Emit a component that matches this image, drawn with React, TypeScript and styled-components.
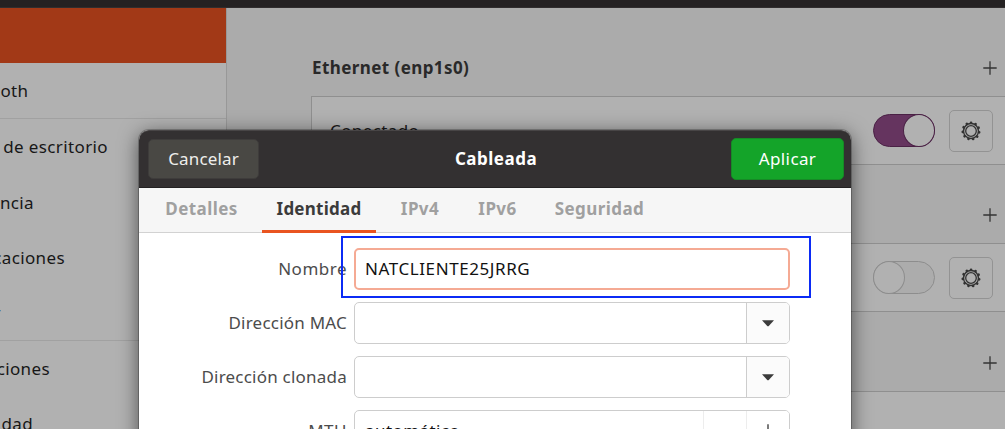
import React from "react";
import styled, { createGlobalStyle } from "styled-components";

const Global = createGlobalStyle`
  * { box-sizing: border-box; }
  body {
    margin: 0;
    overflow: hidden;
    font-family: "Noto Sans", "Open Sans", sans-serif;
    font-size: 17px;
    line-height: 24px;
  }
`;

const Screen = styled.div`
  position: relative;
  width: 1005px;
  height: 429px;
  overflow: hidden;
  background: #ababab;
  display: flex;
  flex-direction: column;
`;
const TopBar = styled.div`
  flex: none;
  height: 8px;
  background: #242122;
  border-bottom: 1px solid #302d2e;
`;
const Columns = styled.div`
  flex: 1;
  min-height: 0;
  display: flex;
`;

const Sidebar = styled.nav`
  flex: none;
  width: 227px;
  overflow: hidden;
  background: #b1b1b1;
  border-right: 1px solid #989898;
`;
const SideRow = styled.div<{ $active?: boolean; $line?: boolean; $h?: number }>`
  height: ${(p) => p.$h ?? 55}px;
  display: flex;
  align-items: center;
  background: ${(p) => (p.$active ? "#a23917" : "transparent")};
  border-bottom: ${(p) => (p.$line ? "1px solid #a1a1a1" : "none")};
`;
const SideName = styled.div<{ $w: number }>`
  width: ${(p) => p.$w}px;
  display: flex;
  justify-content: flex-end;
  overflow: hidden;
  white-space: nowrap;
  color: #171717;
  letter-spacing: 0.38px;
`;

const Main = styled.main`
  flex: 1;
  overflow: hidden;
  padding-left: 84px;
`;
const SectionHead = styled.div<{ $top: number; $bottom: number }>`
  padding: ${(p) => p.$top}px 8px ${(p) => p.$bottom}px 1px;
  height: ${(p) => p.$top + p.$bottom + 24}px;
  display: flex;
  align-items: center;
  justify-content: space-between;
  font-weight: 700;
  letter-spacing: 0.42px;
  color: #292929;
`;
const Card = styled.section`
  height: 69px;
  margin-right: -12px;
  padding: 0 23px 0 18px;
  display: flex;
  align-items: center;
  background: #b1b1b1;
  border: 1px solid #8f8f8f;
  color: #1a1a1a;
  letter-spacing: 0.4px;
`;
const Grow = styled.div`
  flex: 1;
`;
const Toggle = styled.div<{ $on?: boolean }>`
  width: 62px;
  height: 33px;
  border-radius: 17px;
  display: flex;
  justify-content: ${(p) => (p.$on ? "flex-end" : "flex-start")};
  background: ${(p) => (p.$on ? "#65345f" : "#acacac")};
  border: 1px solid ${(p) => (p.$on ? "#4a2145" : "#8d8d8d")};
`;
const Knob = styled.div<{ $on?: boolean }>`
  width: 32px;
  height: 33px;
  margin: -1px;
  border-radius: 50%;
  background: #b1b1b1;
  border: 1px solid ${(p) => (p.$on ? "#4a2145" : "#8d8d8d")};
`;
const GearButton = styled.div`
  width: 44px;
  height: 42px;
  margin-left: 14px;
  border: 1px solid #939393;
  border-radius: 5px;
  display: flex;
  align-items: center;
  justify-content: center;
`;

const Dialog = styled.div`
  position: absolute;
  left: 139px;
  top: 130px;
  width: 712px;
  height: 340px;
  border-radius: 10px 10px 0 0;
  background: #fff;
  box-shadow: 0 0 0 1px rgba(0, 0, 0, 0.22), 0 4px 20px rgba(0, 0, 0, 0.58);
`;
const DialogHeader = styled.header`
  height: 58px;
  padding: 0 7px 0 9px;
  display: grid;
  grid-template-columns: 1fr auto 1fr;
  align-items: center;
  border-radius: 10px 10px 0 0;
  background: #333031;
  border-top: 1px solid #484546;
  border-bottom: 1px solid #232122;
`;
const Title = styled.div`
  color: #fff;
  font-weight: 700;
  letter-spacing: 0.5px;
`;
const Button = styled.button<{ $primary?: boolean }>`
  width: ${(p) => (p.$primary ? 113 : 111)}px;
  height: ${(p) => (p.$primary ? 42 : 40)}px;
  justify-self: ${(p) => (p.$primary ? "end" : "start")};
  padding: 0 0 1px;
  font: inherit;
  letter-spacing: ${(p) => (p.$primary ? 0.4 : 0.15)}px;
  border-radius: 5px;
  color: ${(p) => (p.$primary ? "#fff" : "#eeeeec")};
  background: ${(p) => (p.$primary ? "#14a429" : "#494844")};
  border: 1px solid ${(p) => (p.$primary ? "#168a26" : "#3e3c3b")};
`;
const Tabs = styled.div`
  height: 45px;
  padding-left: 2px;
  display: flex;
  background: #f6f6f6;
  border-bottom: 1px solid #d2d2d2;
`;
const Tab = styled.div<{ $w: number; $active?: boolean }>`
  width: ${(p) => p.$w}px;
  height: 45px;
  display: flex;
  align-items: center;
  justify-content: center;
  font-weight: 700;
  letter-spacing: ${(p) => (p.$active ? 0.25 : 0.42)}px;
  color: ${(p) => (p.$active ? "#3b3b3b" : "#a0a0a0")};
  border-bottom: 3px solid ${(p) => (p.$active ? "#e95420" : "transparent")};
`;
const Form = styled.div`
  padding: 15px 60px 0 0;
  display: grid;
  grid-template-columns: 208px 436px;
  column-gap: 7px;
  row-gap: 12px;
  align-items: center;
`;
const Label = styled.label<{ $ls?: number }>`
  text-align: right;
  color: #4c4c4c;
  letter-spacing: ${(p) => p.$ls ?? 0.22}px;
`;
const Field = styled.div<{ $focus?: boolean }>`
  height: 42px;
  padding-left: ${(p) => (p.$focus ? 9 : 10)}px;
  display: flex;
  align-items: center;
  overflow: hidden;
  border-radius: 5px;
  color: #111;
  letter-spacing: ${(p) => (p.$focus ? 0.58 : 0.42)}px;
  background: #fff;
  border: ${(p) => (p.$focus ? "2px solid #f5aa94" : "1px solid #cdcdcd")};
`;
const FieldButton = styled.div<{ $plain?: boolean }>`
  width: 43px;
  height: 40px;
  display: flex;
  align-items: center;
  justify-content: center;
  background: ${(p) => (p.$plain ? "#fff" : "#fbfbfb")};
  border-left: 1px solid ${(p) => (p.$plain ? "#ededed" : "#cdcdcd")};
`;
const Highlight = styled.div`
  position: absolute;
  left: 202px;
  top: 106px;
  width: 470px;
  height: 62px;
  border: 2px solid #0b2bf5;
`;

const Plus = () => (
  <svg width="14" height="14" viewBox="0 0 14 14" stroke="#343434" strokeWidth="1.3">
    <path d="M7 .3v13.4M.3 7h13.4" />
  </svg>
);
const Gear = () => (
  <svg width="20" height="20" viewBox="0 0 20 20" fill="none" stroke="#333">
    <circle
      cx="10"
      cy="10"
      r="8.3"
      strokeWidth="2.6"
      strokeLinecap="round"
      strokeDasharray="0.1 4.641"
      transform="rotate(-90 10 10)"
    />
    <circle cx="10" cy="10" r="7.5" strokeWidth="1.4" />
    <circle cx="10" cy="10" r="5.3" strokeWidth="1.3" />
  </svg>
);
const Caret = () => (
  <svg width="12" height="7" viewBox="0 0 12 7" fill="#3b3b3b">
    <path d="M0 .3h12L7 5.7Q6 6.7 5 5.7Z" />
  </svg>
);

export default function App() {
  return (
    <Screen>
      <Global />
      <TopBar />
      <Columns>
        <Sidebar>
          <SideRow $active />
          <SideRow $h={56} $line><SideName $w={28.5}>oth</SideName></SideRow>
          <SideRow $h={56}><SideName $w={108}>de escritorio</SideName></SideRow>
          <SideRow><SideName $w={34}>encia</SideName></SideRow>
          <SideRow><SideName $w={65}>caciones</SideName></SideRow>
          <SideRow $h={56} $line><SideName $w={1}>r</SideName></SideRow>
          <SideRow><SideName $w={50}>ciones</SideName></SideRow>
          <SideRow><SideName $w={33}>dad</SideName></SideRow>
        </Sidebar>
        <Main>
          <SectionHead $top={48} $bottom={16}>Ethernet (enp1s0)<Plus /></SectionHead>
          <Card>
            Conectado
            <Grow />
            <Toggle $on><Knob $on /></Toggle>
            <GearButton><Gear /></GearButton>
          </Card>
          <SectionHead $top={38} $bottom={16}><Grow /><Plus /></SectionHead>
          <Card>
            <Grow />
            <Toggle><Knob /></Toggle>
            <GearButton><Gear /></GearButton>
          </Card>
          <SectionHead $top={39} $bottom={16}><Grow /><Plus /></SectionHead>
          <Card />
        </Main>
      </Columns>
      <Dialog>
        <DialogHeader>
          <Button>Cancelar</Button>
          <Title>Cableada</Title>
          <Button $primary>Aplicar</Button>
        </DialogHeader>
        <Tabs>
          <Tab $w={121}>Detalles</Tab>
          <Tab $w={114} $active>Identidad</Tab>
          <Tab $w={88}>IPv4</Tab>
          <Tab $w={67}>IPv6</Tab>
          <Tab $w={137}>Seguridad</Tab>
        </Tabs>
        <Form>
          <Label $ls={0.5}>Nombre</Label>
          <Field $focus>NATCLIENTE25JRRG</Field>
          <Label>Dirección MAC</Label>
          <Field><Grow /><FieldButton><Caret /></FieldButton></Field>
          <Label>Dirección clonada</Label>
          <Field><Grow /><FieldButton><Caret /></FieldButton></Field>
          <Label $ls={0.5}>MTU</Label>
          <Field>
            automático
            <Grow />
            <FieldButton $plain />
            <FieldButton $plain><Plus /></FieldButton>
          </Field>
        </Form>
        <Highlight />
      </Dialog>
    </Screen>
  );
}
